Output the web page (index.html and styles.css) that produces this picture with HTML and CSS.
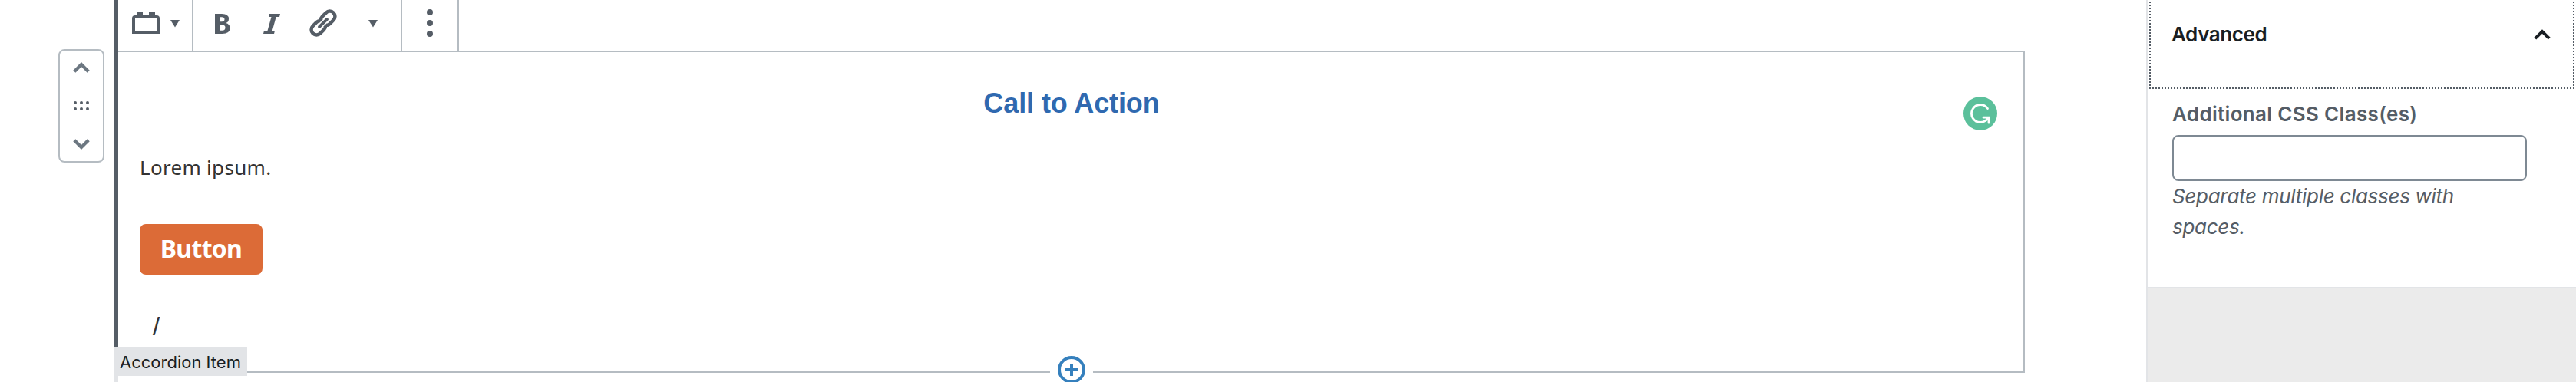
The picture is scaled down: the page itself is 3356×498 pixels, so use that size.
FILE: index.html
```html
<!DOCTYPE html>
<html lang="en">
<head>
<meta charset="utf-8">
<title>Block editor</title>
<link rel="stylesheet" href="styles.css">
</head>
<body>
<main class="editor">
  <div class="rail">
    <div class="mover">
      <svg class="chevron" viewBox="0 0 22 14"><path d="M1.8 12.2 11 3l9.2 9.2"/></svg>
      <svg class="handle" viewBox="0 0 20 12"><circle cx="2" cy="2" r="2"/><circle cx="10" cy="2" r="2"/><circle cx="18" cy="2" r="2"/><circle cx="2" cy="10" r="2"/><circle cx="10" cy="10" r="2"/><circle cx="18" cy="10" r="2"/></svg>
      <svg class="chevron" viewBox="0 0 22 14"><path d="M1.8 1.8 11 11l9.2-9.2"/></svg>
    </div>
  </div>
  <div class="stripe"></div>
  <section class="block">
    <div class="toolbar">
      <div class="group group-type">
        <svg class="icon-block" viewBox="0 0 36 28"><path fill-rule="evenodd" d="M4 4H6V0h8v4h8V0h8v4h2q4 0 4 4v20H0V8q0-4 4-4zM4 8v16h28V8z"/></svg>
        <svg class="caret" viewBox="0 0 12 9"><path d="M0 0h12L6 9.500z"/></svg>
      </div>
      <div class="group group-format">
        <svg class="icon-bold" viewBox="0 0 20 26"><path fill-rule="evenodd" d="M0 0h9q9 0 9 6.500 0 4.500-4 5.500 5.500 1 5.500 6.500 0 7.500-10 7.500H0zM6 4.300v6h3q3.500 0 3.500-3t-3.500-3zM6 14.500v7.200h3.500q4 0 4-3.700t-4-3.500z"/></svg>
        <svg class="icon-italic" viewBox="0 0 22 26"><path d="M8 0h14l-1 4h-4.300l-5 18H15l-1 4H0l1-4h4.500l5-18H7z"/></svg>
        <svg class="icon-link" viewBox="0 0 34 34"><g transform="rotate(-45 17 17)"><rect x="-2" y="10.200" width="20.500" height="13.600" rx="6.800"/><rect x="15.500" y="10.200" width="20.500" height="13.600" rx="6.800"/><path class="link-gap" d="M9.500 17h15"/><path class="link-bar" d="M10 17h14"/></g></svg>
        <svg class="caret" viewBox="0 0 12 9"><path d="M0 0h12L6 9.500z"/></svg>
      </div>
      <div class="group group-more">
        <svg class="icon-more" viewBox="0 0 8 36"><circle cx="4" cy="4" r="4"/><circle cx="4" cy="18" r="4"/><circle cx="4" cy="32" r="4"/></svg>
      </div>
    </div>
    <div class="content">
      <h2 class="title">Call to Action</h2>
      <p class="lorem">Lorem ipsum.</p>
      <a class="button"><span>Button</span></a>
      <p class="slash">/</p>
      <svg class="grammar" viewBox="0 0 44 44"><circle class="grammar-disc" cx="22" cy="22" r="22"/><path d="M31.500 15.500A11.500 11.500 0 1 0 22 33.500Q27.500 33.500 32 28.500M26 27.200h7v7"/></svg>
    </div>
    <span class="crumb">Accordion Item</span>
    <div class="inserter"><svg viewBox="0 0 36 36"><circle cx="18" cy="18" r="16"/><path d="M10 18h16M18 10v16"/></svg></div>
  </section>
  <aside class="sidebar">
    <div class="panel">
      <div class="panel-head">
        <span class="panel-title">Advanced</span>
        <svg class="chevron" viewBox="0 0 22 14"><path d="M1.800 12.200 11 3l9.200 9.200"/></svg>
      </div>
      <div class="panel-body">
        <label class="label" for="css">Additional CSS Class(es)</label>
        <input class="field" id="css" type="text">
        <p class="help">Separate multiple classes with<br>spaces.</p>
      </div>
    </div>
  </aside>
</main>
</body>
</html>
```
FILE: styles.css
```css
* { box-sizing: border-box; }
body { margin: 0; background: #fff; font-family: Inter, "Liberation Sans", sans-serif; color: #191e23; }
h2, p { margin: 0; }
svg { display: block; flex: none; overflow: visible; }

.editor { display: grid; grid-template-columns: 148px 6px 2484px 158px 560px; height: 498px; overflow: hidden; }
.rail { padding: 64px 0 0 76px; }
.mover { width: 60px; height: 148px; border: 2px solid #b5bcc2; border-radius: 8px; display: flex; flex-direction: column; align-items: center; justify-content: space-between; padding: 15px 0; }
.chevron { width: 22px; height: 14px; fill: none; stroke: #6c7781; stroke-width: 4.4; }
.handle { width: 20px; height: 12px; fill: #555d66; }
.stripe { background: linear-gradient(#555d66 452px, #e2e4e7 452px); }

.block { position: relative; display: grid; grid-template-rows: 66px 420px; }
.toolbar { display: flex; fill: #555d66; }
.group { display: flex; border-right: 2px solid #b5bcc2; }
.group-type { width: 98px; padding: 16px 0 0 18px; gap: 14px; }
.group-format { width: 272px; padding-left: 28px; }
.group-more { width: 74px; padding: 12px 0 0 32px; }
.icon-block { width: 36px; height: 28px; }
.caret { width: 12px; height: 9px; margin-top: 10px; }
.icon-bold { width: 20px; height: 26px; margin-top: 18px; }
.icon-italic { width: 22px; height: 26px; margin: 18px 0 0 43px; }
.icon-link { width: 34px; height: 34px; margin: 13px 0 0 39px; }
.icon-link rect { fill: none; stroke: #555d66; stroke-width: 4.5; }
.link-gap { stroke: #fff; stroke-width: 7; }
.link-gap, .link-bar { fill: none; }
.link-bar { stroke: #555d66; stroke-width: 4; stroke-linecap: round; }
.group-format .caret { margin: 26px 0 0 42px; }
.icon-more { width: 8px; height: 36px; }

.content { position: relative; border: 2px solid #b5bcc2; border-left: 0; padding-left: 28px; }
.title { margin: 46px 26px 0 0; text-align: center; font: bold 36px/42px "Liberation Sans", sans-serif; letter-spacing: -.1px; color: #2f69b0; }
.lorem { margin-top: 44px; font: 26px/36px "Noto Sans", sans-serif; letter-spacing: .3px; color: #333; }
.button { display: flex; align-items: center; justify-content: center; width: 160px; height: 66px; margin-top: 56px; padding-bottom: 2px; border-radius: 8px; background: #dc6b37; color: #fff; font: bold 32px/40px "Noto Sans", sans-serif; letter-spacing: -.7px; }
.slash { margin: 50px 0 0 17px; font: 33px/36px "Liberation Sans", sans-serif; color: #333; }
.grammar { position: absolute; right: 34px; top: 58px; width: 44px; height: 44px; fill: none; stroke: #fff; stroke-width: 2.8; stroke-linecap: round; }
.grammar-disc { fill: #5bc09b; stroke: none; }
.crumb { position: absolute; left: -6px; top: 452px; width: 174px; height: 38px; padding-left: 8px; background: #e2e4e7; font-size: 22px; line-height: 40px; white-space: nowrap; }
.inserter { position: absolute; left: 1214px; top: 464px; width: 56px; padding-left: 10px; background: #fff; }
.inserter svg { width: 36px; height: 36px; fill: #fff; stroke: #3580bd; stroke-width: 4; }

.sidebar { grid-column: 5; border-left: 2px solid #e2e4e7; background: #ebebeb; }
.panel { height: 376px; background: #fff; border-bottom: 2px solid #e2e4e7; }
.panel-head { display: flex; justify-content: space-between; align-items: flex-start; width: 554px; height: 116px; margin-left: 2px; padding: 25px 31px 0 29px;
  background: repeating-linear-gradient(90deg, #555d66 0 2px, transparent 2px 4px) bottom / 100% 2px no-repeat,
    repeating-linear-gradient(0deg, #555d66 0 2px, transparent 2px 4px) left / 2px 100% no-repeat,
    repeating-linear-gradient(0deg, #555d66 0 2px, transparent 2px 4px) right / 2px 100% no-repeat; }
.panel-head .chevron { margin-top: 13px; stroke: #191e23; stroke-width: 4; }
.panel-title { font-size: 26px; line-height: 40px; font-weight: 600; letter-spacing: -.4px; }
.panel-body { padding: 13px 0 0 32px; color: #555d66; }
.label { display: block; font-size: 26px; line-height: 40px; font-weight: 600; letter-spacing: .32px; white-space: nowrap; }
.field { display: block; width: 462px; height: 60px; margin-top: 7px; border: 2px solid #7e8993; border-radius: 8px; background: #fff; }
.help { font-size: 26px; line-height: 40px; font-style: italic; letter-spacing: -.29px; white-space: nowrap; }
```
